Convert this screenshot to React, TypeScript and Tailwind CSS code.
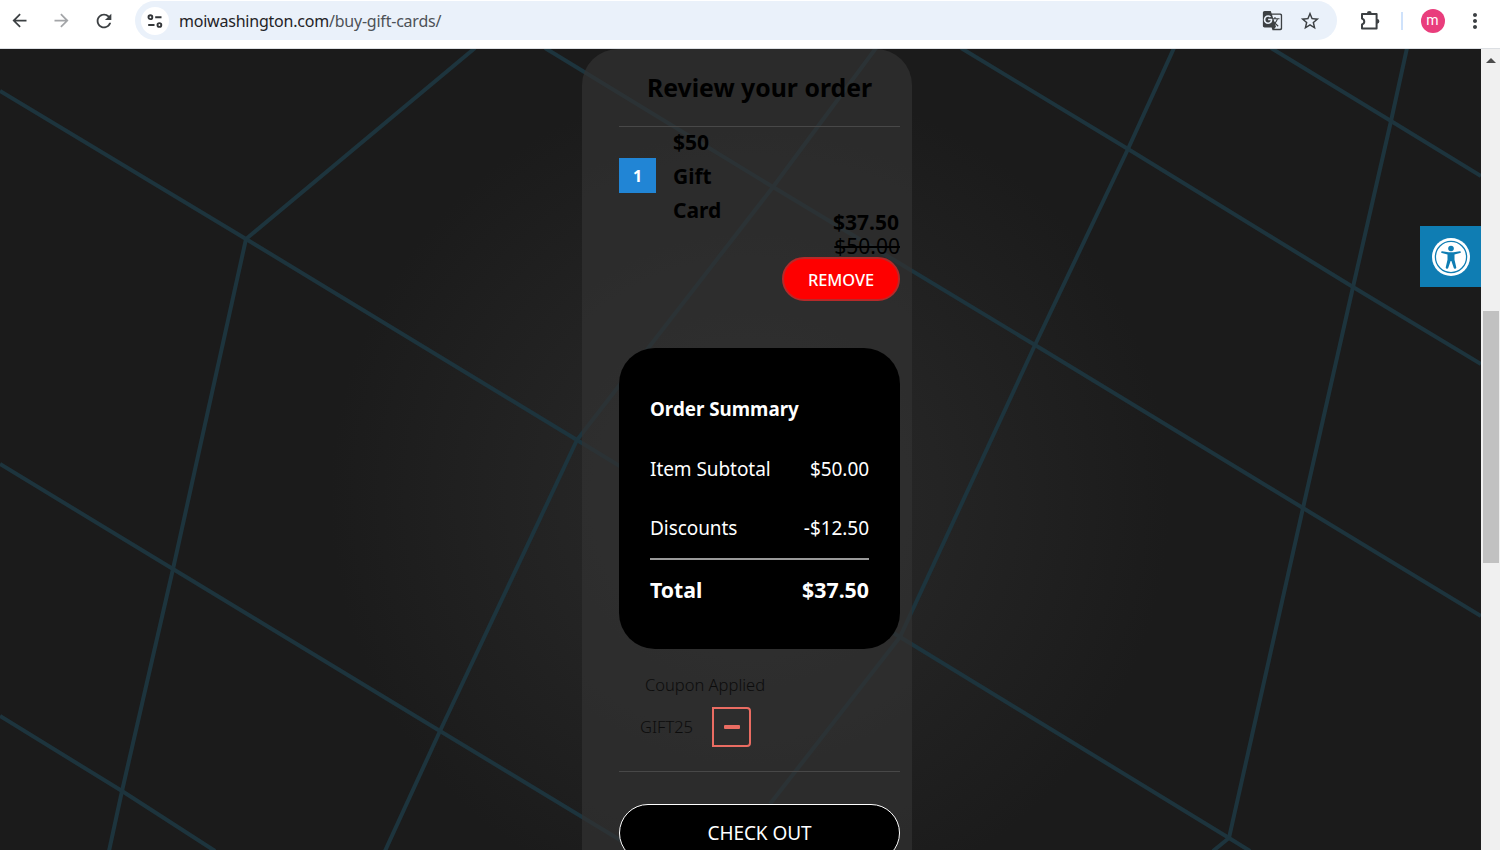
import React from "react";
import {
  MdArrowBack,
  MdArrowForward,
  MdGTranslate,
  MdMoreVert,
  MdRefresh,
  MdStarBorder,
} from "react-icons/md";

const TuneIcon = () => (
  <svg width="16" height="16" viewBox="0 0 16 16" fill="none" stroke="#333639" strokeWidth="1.9">
    <circle cx="3.4" cy="4.2" r="1.9" />
    <path d="M8.2 4.2h6.3M1.2 12h6.3" />
    <circle cx="12.4" cy="12" r="1.9" />
  </svg>
);

const ExtensionIcon = () => (
  <svg width="22" height="22" viewBox="0 0 22 22" fill="none" stroke="#3c4043" strokeWidth="2" strokeLinejoin="round">
    <path d="M3 4h14.6v14.6H3v-4.2c3-.8 3-5 0-5.8z" />
    <path d="M7.9 3.4a2.4 2.4 0 0 1 4.8 0zM18 8.9a2.4 2.4 0 0 1 0 4.8z" fill="#3c4043" stroke="none" />
  </svg>
);

const AccessibilityIcon = () => (
  <svg width="38" height="38" viewBox="0 0 38 38">
    <circle cx="19" cy="19" r="19" fill="#fff" />
    <circle cx="19" cy="19" r="15.6" fill="none" stroke="#0f7db3" strokeWidth="1.3" />
    <g fill="#0f7db3">
      <circle cx="19" cy="10.5" r="2.8" />
      <path d="M10.2 13.2l6.3 1.1h5l6.3-1.1a.9.9 0 0 1 .3 1.8l-5.6 1.4v5.4l1.7 7.2a1.3 1.3 0 0 1-2.5.8L19.4 23h-.8l-2.3 6.8a1.3 1.3 0 0 1-2.5-.8l1.7-7.2v-5.4L9.9 15a.9.9 0 0 1 .3-1.8z" />
    </g>
  </svg>
);

// Net pattern behind the page content
const Backdrop = () => (
  <svg className="absolute inset-0" width="1481" height="801" viewBox="0 49 1481 801" fill="none">
    <g stroke="#1d343d" strokeWidth="4">
      <path d="M0 91L246 239L577 440L900 637L1229 838L1250 851" />
      <path d="M475 48L246 239L173 569L122 791L109 851" />
      <path d="M0 464L173 569L440 731L640 852" />
      <path d="M0 716L122 791L215 851" />
      <path d="M545 48L773 187L1035 345L1303 508L1481 616" />
      <path d="M876 48L773 187L577 440L440 731L385 851" />
      <path d="M961 48L1128 149L1353 287L1481 364" />
      <path d="M1174 48L1128 149L1035 345L900 637L770 804" />
      <path d="M1271 48L1391 121L1481 176" />
      <path d="M1407 48L1391 121L1353 287L1303 508L1229 838L1213 851" />
    </g>
  </svg>
);

const BrowserBar = () => (
  <div className="flex h-[49px] items-start border-b border-[#dcdfe3] bg-white">
    <div className="flex h-[41px] w-[135px] items-center gap-[21px] pl-[9px]">
      <MdArrowBack size={21} color="#3c4043" />
      <MdArrowForward size={21} color="#a3a5a8" />
      <MdRefresh size={22} color="#3c4043" />
    </div>
    <div className="mt-px flex h-[39px] w-[1202px] items-center rounded-full bg-[#eaf1fa] pl-[6px] pr-[16px]">
      <div className="flex h-7 w-7 items-center justify-center rounded-full bg-white">
        <TuneIcon />
      </div>
      <div className="ml-[10px] flex-1 pt-px text-[16px] leading-6 tracking-[-0.22px] text-[#1f2327]">
        moiwashington.com<span className="text-[#4d5257]">/buy-gift-cards/</span>
      </div>
      <MdGTranslate size={21} color="#3c4043" />
      <MdStarBorder size={22} color="#3c4043" className="ml-4" />
    </div>
    <div className="flex h-[41px] flex-1 items-center pl-[22px]">
      <ExtensionIcon />
      <div className="ml-5 h-[18px] w-[1.5px] bg-[#cfe2fb]" />
      <div className="ml-[18px] flex h-6 w-6 items-center justify-center rounded-full bg-[#e93d7c] font-[Roboto] text-[14px] text-white">
        m
      </div>
      <MdMoreVert size={24} color="#3c4043" className="ml-[18px]" />
    </div>
  </div>
);

const OrderSummary = () => (
  <div className="mt-[47px] h-[301px] rounded-[36px] bg-black px-[31px] pt-[46px] text-[19px] leading-[30px] tracking-[-0.06px] text-white">
    <div className="text-[18.8px] font-bold tracking-normal">Order Summary</div>
    <div className="mt-[30px] flex justify-between">
      <span>Item Subtotal</span>
      <span>$50.00</span>
    </div>
    <div className="mt-[29px] flex justify-between">
      <span>Discounts</span>
      <span>-$12.50</span>
    </div>
    <div className="mt-[15px] h-[2px] bg-[#999]" />
    <div className="mt-[15px] flex justify-between text-[21.3px] font-bold tracking-normal">
      <span>Total</span>
      <span>$37.50</span>
    </div>
  </div>
);

const OrderCard = () => (
  <div className="relative ml-[582px] h-[840px] w-[330px] rounded-t-[36px] bg-[#323232]/70 pl-[37px] pr-[12px] text-black">
    <div className="h-[78px] border-b border-[#484848] pt-[18px] text-center text-[24.8px] font-bold leading-[40px]">
      Review your order
    </div>

    {/* Cart item */}
    <div className="flex h-[83px]">
      <div className="mt-[31px] flex h-[35px] w-[37px] items-center justify-center bg-[#2185d5] text-[16px] font-bold text-white">
        1
      </div>
      <div className="-mt-[2px] ml-[17px] w-[60px] text-[21px] font-bold leading-[34px]">
        $50 Gift Card
      </div>
    </div>
    <div className="flex flex-col items-end text-[21px] leading-[24px]">
      <span className="pr-px font-bold">$37.50</span>
      <span className="line-through">$50.00</span>
      <button className="mt-[-1px] h-[44px] w-[118px] rounded-full border-2 border-[#b62929] bg-[#fe0000] pt-px text-[16.4px] font-medium tracking-[-0.1px] text-white">
        REMOVE
      </button>
    </div>

    <OrderSummary />

    {/* Coupon */}
    <div className="h-[123px] border-b border-[#484848] pt-[24px] text-[16.5px] font-light leading-6 text-[#0c0c0c]">
      <div className="pl-[26px]">Coupon Applied</div>
      <div className="mt-[10px] flex items-center pl-[21px]">
        <span className="w-[72px]">GIFT25</span>
        <button className="flex h-[40px] w-[39px] items-center justify-center rounded-r-[4px] border-2 border-[#ea6c62]">
          <span className="h-1 w-4 rounded-[1px] bg-[#ea6c62]" />
        </button>
      </div>
    </div>

    <button className="mt-[32px] h-[58px] w-full rounded-full border border-white bg-black text-[19px] tracking-[-0.06px] text-white">
      CHECK OUT
    </button>
  </div>
);

const Scrollbar = () => (
  <div className="flex w-[19px] flex-col items-center bg-[#f0f0f0]">
    <svg className="mt-[9px]" width="10" height="5" viewBox="0 0 10 5">
      <path d="M5 0l5 5H0z" fill="#4c4c4c" />
    </svg>
    <div className="mt-[248px] h-[252px] w-4 bg-[#c1c1c1]" />
  </div>
);

const App = () => {
  return (
    <div className="h-[850px] w-[1500px] overflow-hidden font-['Noto_Sans',sans-serif]">
      <BrowserBar />
      <div className="flex h-[801px]">
        <div className="relative w-[1481px] overflow-hidden bg-[#1b1b1b] bg-[radial-gradient(circle_at_750px_450px,#2a2a2a_0,#242424_190px,#1b1b1b_420px)]">
          <Backdrop />
          <OrderCard />
          <div className="absolute right-0 top-[177px] flex h-[61px] w-[61px] items-center justify-center bg-[#0f7db3]">
            <AccessibilityIcon />
          </div>
        </div>
        <Scrollbar />
      </div>
    </div>
  );
};

export default App;
